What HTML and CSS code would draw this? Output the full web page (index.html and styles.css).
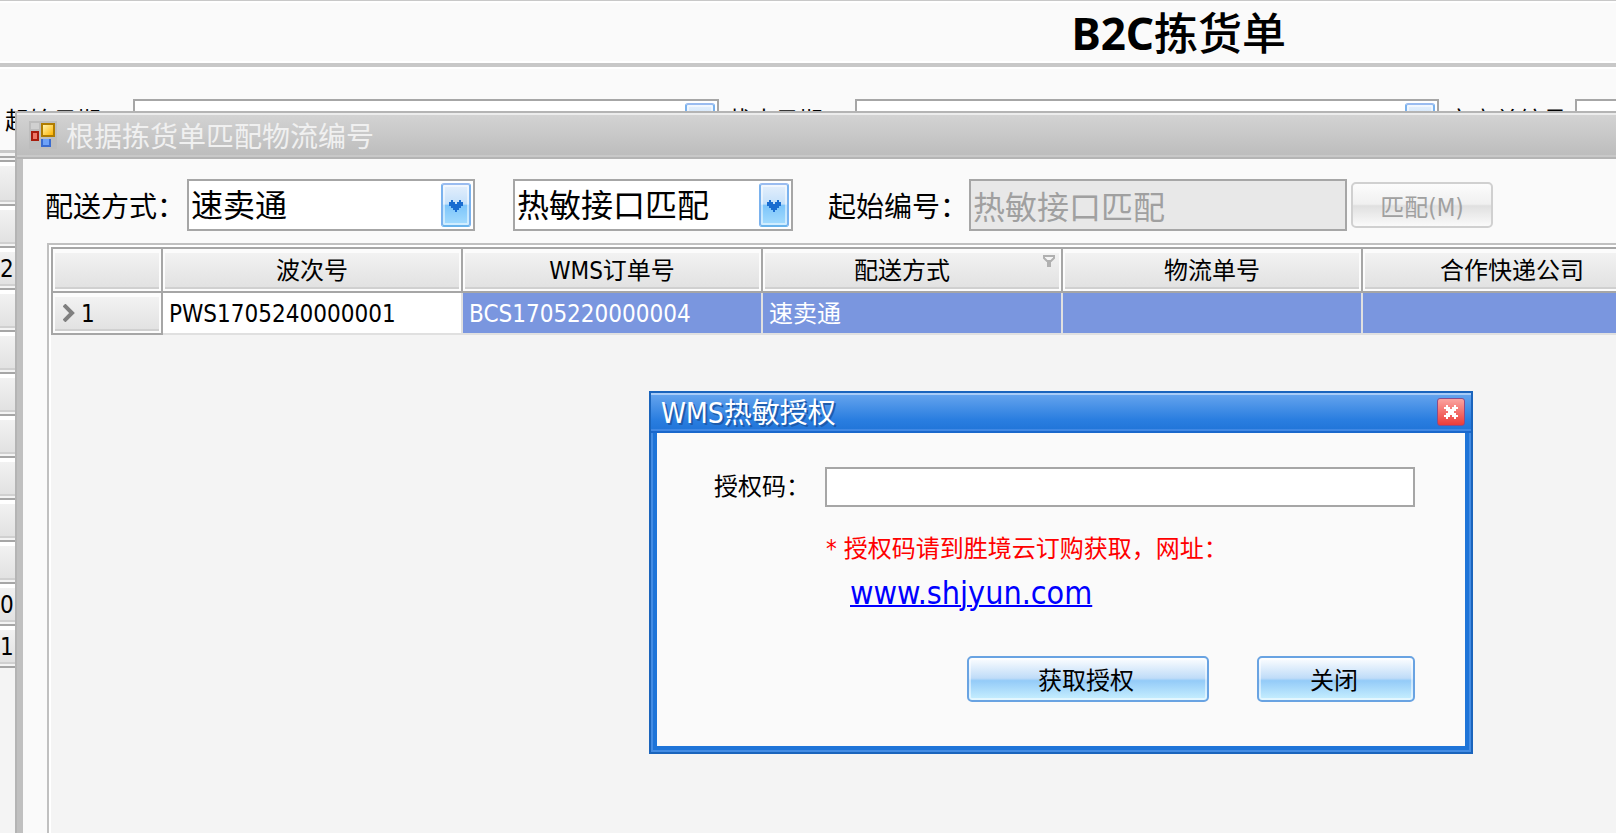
FILE: index.html
```
<!DOCTYPE html>
<html lang="zh-CN">
    <head>
        <title>B2C拣货单</title>
        <meta charset="UTF-8">
        <meta name="viewport" content="width=device-width,initial-scale=1">
        <link rel="stylesheet" href="styles.css">
    </head>
    <body>
        <div class="app">
            <header class="app-header">
                <h1>B2C<span>拣货单</span></h1>
            </header>

            <div class="filters">
                <label for="startDate">起始日期：</label>
                <div class="combo combo-filter">
                    <select id="startDate"><option></option></select>
                    <span class="combo-arrow"></span>
                </div>
                <label for="endDate">截止日期：</label>
                <div class="combo combo-filter">
                    <select id="endDate"><option></option></select>
                    <span class="combo-arrow"></span>
                </div>
                <label for="orderNo">客户单编号</label>
                <input id="orderNo" class="filter-text" type="text">
            </div>

            <div class="row-headers">
                <div class="row-head"></div>
                <div class="row-head"></div>
                <div class="row-head">2</div>
                <div class="row-head"></div>
                <div class="row-head"></div>
                <div class="row-head"></div>
                <div class="row-head"></div>
                <div class="row-head"></div>
                <div class="row-head"></div>
                <div class="row-head"></div>
                <div class="row-head">0</div>
                <div class="row-head">1</div>
            </div>
        </div>

        <section class="window">
            <div class="window-title">
                <svg class="window-icon" viewBox="0 0 28 28" shape-rendering="crispEdges">
                    <defs>
                        <linearGradient id="gold" x1="0" y1="0" x2="1" y2="1"><stop offset="0" stop-color="#fff3b0"/><stop offset="1" stop-color="#ffb400"/></linearGradient>
                    </defs>
                    <rect width="28" height="28" fill="#bdbdbd"/>
                    <rect x="2" y="2" width="8" height="6" fill="#d0d0d0"/>
                    <rect x="12" y="2" width="14" height="14" fill="#b07c00"/>
                    <rect x="14" y="4" width="10" height="10" fill="url(#gold)"/>
                    <rect x="2" y="10" width="8" height="10" fill="#a81c0c"/>
                    <rect x="4" y="12" width="4" height="6" fill="#ee7766"/>
                    <rect x="12" y="18" width="10" height="8" fill="#3a6cd0"/>
                    <rect x="14" y="18" width="6" height="6" fill="#6ea2f8"/>
                </svg>
                <span>根据拣货单匹配物流编号</span>
            </div>

            <div class="window-body">
                <form class="match-form">
                    <label for="delivery">配送方式：</label>
                    <div class="combo combo-delivery">
                        <select id="delivery"><option>速卖通</option></select>
                        <span class="combo-arrow"><svg viewBox="0 0 14 12"><path d="M0 2h2V0h2v2h2v2h2V2h2V0h2v2h2v4h-2v2h-2v2H8v2H6v-2H4V8H2V6H0z"/></svg></span>
                    </div>
                    <div class="combo combo-mode">
                        <select id="mode" aria-label="匹配方式"><option>热敏接口匹配</option></select>
                        <span class="combo-arrow"><svg viewBox="0 0 14 12"><path d="M0 2h2V0h2v2h2v2h2V2h2V0h2v2h2v4h-2v2h-2v2H8v2H6v-2H4V8H2V6H0z"/></svg></span>
                    </div>
                    <label for="startNo">起始编号：</label>
                    <input id="startNo" type="text" value="热敏接口匹配" disabled>
                    <button class="btn-match" type="button" disabled>匹配(M)</button>
                </form>

                <div class="grid">
                    <table>
                        <colgroup>
                            <col class="col-indicator">
                            <col><col><col><col><col>
                        </colgroup>
                        <thead>
                            <tr>
                                <th></th>
                                <th>波次号</th>
                                <th>WMS订单号</th>
                                <th class="filterable">配送方式<svg class="filter-icon" viewBox="0 0 12 12"><path d="M1 1h10v2L8 6H4L1 3z" fill="#f4f4f4" stroke="#b0b0b0" stroke-width="2"/><path d="M4 6h4v6H4z" fill="#b0b0b0"/></svg></th>
                                <th>物流单号</th>
                                <th>合作快递公司</th>
                            </tr>
                        </thead>
                        <tbody>
                            <tr>
                                <th scope="row"><svg class="row-arrow" viewBox="0 0 12 18"><path d="M1 1l8 8-8 8" fill="none" stroke="#808080" stroke-width="4"/></svg>1</th>
                                <td class="focused">PWS1705240000001</td>
                                <td>BCS1705220000004</td>
                                <td>速卖通</td>
                                <td></td>
                                <td></td>
                            </tr>
                        </tbody>
                    </table>
                </div>
            </div>
        </section>

        <section class="dialog" role="dialog" aria-labelledby="dialogTitle">
            <div class="dialog-title">
                <span id="dialogTitle">WMS热敏授权</span>
                <button class="dialog-close" type="button" aria-label="关闭">
                    <svg viewBox="0 0 14 14"><path d="M2 0h2v2h2v2h2V2h2V0h2v2h2v2h-2v2h-2v2h2v2h2v2h-2v2h-2v-2H8v-2H6v2H4v2H2v-2H0v-2h2V8h2V6H2V4H0V2h2z" fill="#fff"/></svg>
                </button>
            </div>
            <form class="dialog-body">
                <div class="code-row">
                    <label for="authCode">授权码：</label>
                    <input id="authCode" type="text">
                </div>
                <div class="hint">
                    <p>* 授权码请到胜境云订购获取，网址：</p>
                    <a href="#">www.shjyun.com</a>
                </div>
                <div class="dialog-buttons">
                    <button class="btn btn-wide" type="button">获取授权</button>
                    <button class="btn" type="button">关闭</button>
                </div>
            </form>
        </section>
    </body>
</html>
```
FILE: styles.css
```
* {
    box-sizing: border-box;
}

body {
    margin: 0;
    height: 100vh;
    position: relative;
    overflow: hidden;
    background: #f4f4f4;
    color: #000;
    font-family: "DejaVu Sans Condensed", "Noto Sans CJK SC", sans-serif;
    font-size: 24px;
    line-height: 28px;
    white-space: nowrap;
}

input, select, button {
    font-family: inherit;
    color: inherit;
    margin: 0;
    border-radius: 0;
}

input[type="text"], select {
    border: 2px solid #a6a6a6;
    background: #fff;
    outline: 0;
}

/* main form, behind the windows */
.app {
    overflow: hidden;
}

.app-header {
    height: 67px;
    padding-left: 66.3vw;
    border-top: 1px solid #c8c8c8;
    border-bottom: 4px solid #c8c8c8;
    background: #fafafa;
    box-shadow: inset 0 2px #fff, inset 0 -2px #fff;
}

.app-header h1 {
    margin: 0;
    font-family: "Noto Sans", "Noto Sans CJK SC", sans-serif;
    font-size: 44px;
    line-height: 60px;
}

.app-header h1 span {
    font-family: "Noto Sans CJK SC", sans-serif;
    font-weight: 500;
}

.filters {
    display: flex;
    height: 86px;
    padding: 30px 0 0 5px;
    background: #fafafa;
    border-top: 2px solid #fff;
    border-bottom: 3px solid #c8c8c8;
}

.filters label {
    flex: none;
    width: 128px;
    padding-top: 8px;
}

.filters .combo + label {
    width: 136px;
    padding-left: 8px;
}

.combo {
    position: relative;
    flex: none;
}

.combo select {
    width: 100%;
    height: 52px;
    padding: 2px 40px 0 2px;
    appearance: none;
    font-size: 32px;
}

.combo-filter {
    width: 586px;
}

.combo-filter + label + .combo-filter {
    width: 584px;
}

.filter-text {
    flex: none;
    width: 400px;
    height: 52px;
}

.combo-arrow {
    position: absolute;
    top: 4px;
    right: 4px;
    width: 30px;
    height: 44px;
    display: flex;
    align-items: center;
    justify-content: center;
    pointer-events: none;
    border: 2px solid #7ab2ee;
    border-top-color: #9abcf0;
    border-bottom-color: #6ab4ec;
    border-radius: 3px;
    background: linear-gradient(#e4effc, #c4e0fa 48%, #7cc4fa 50%, #a4dcfe);
    box-shadow: inset 0 0 0 2px rgba(255,255,255,0.5);
}

.combo-arrow svg {
    width: 14px;
    height: 12px;
    margin-top: 2px;
    fill: #1a6cd0;
}

.row-headers {
    margin-top: 3px;
    border-top: 2px solid #a6a6a6;
    padding-top: 2px;
}

.row-head {
    width: 110px;
    height: 42px;
    line-height: 42px;
    border-top: 2px solid #a6a6a6;
    background: linear-gradient(#f4f4f4, #e0e0e0);
    box-shadow: inset 0 4px #fff, inset 0 -2px #f4f4f4, inset 0 -4px #d0d0d0;
}

.row-head:first-child {
    height: 44px;
}

.row-head:last-child {
    height: 44px;
    border-bottom: 2px solid #a6a6a6;
}

/* match window */
.window {
    position: absolute;
    top: 111px;
    left: 15px;
    right: 0;
    bottom: 0;
    overflow: hidden;
    display: flex;
    flex-direction: column;
    border: 2px solid #b4b4b4;
    border-width: 2px 0 0 2px;
    background: #c0c0c0;
}

.window-title {
    flex: none;
    display: flex;
    align-items: center;
    height: 46px;
    padding: 0 0 0 12px;
    border-bottom: 2px solid #b4b4b4;
    background: linear-gradient(#d4d4d4, #bcbcbc);
    box-shadow: inset 0 2px #ececec, inset 0 -2px #c8c8c8;
    color: #f0f0f0;
    font-size: 28px;
}

.window-title span {
    padding-top: 6px;
}

.window-icon {
    width: 28px;
    height: 28px;
    margin-right: 9px;
}

.window-body {
    flex: 1;
    display: flex;
    flex-direction: column;
    margin-left: 6px;
    padding: 20px 0 0 24px;
    background: #fafafa;
}

.match-form {
    display: flex;
    align-items: center;
    height: 52px;
    margin-bottom: 12px;
    font-size: 28px;
}

.match-form label {
    width: 141px;
    flex: none;
    padding-top: 6px;
}

.match-form label:first-child {
    width: 142px;
    margin-left: -2px;
}

.combo-delivery {
    width: 288px;
    margin-right: 38px;
}

.combo-mode {
    width: 280px;
    margin-right: 35px;
}

.match-form input {
    flex: none;
    width: 378px;
    height: 52px;
    padding: 0 2px;
    font-size: 32px;
}

.match-form input:disabled {
    background: #e8e8e8;
    color: #a0a0a0;
}

.btn-match {
    flex: none;
    width: 142px;
    height: 46px;
    margin-left: 4px;
    padding: 0;
    border: 2px solid #d0d0d0;
    border-radius: 5px;
    background: linear-gradient(#fcfcfc, #f0f0f0 48%, #e0e0e0 52%, #fafafa);
    color: #a0a0a0;
    font-size: 24px;
}

.grid {
    flex: 1;
    padding: 2px 0 0 2px;
    border: 2px solid #c0c0c0;
    border-width: 2px 0 0 2px;
    background: #f4f4f4;
    box-shadow: inset 2px 2px #fff;
    overflow: hidden;
}

.grid table {
    width: 1612px;
    table-layout: fixed;
    border-collapse: separate;
    border-spacing: 0;
    border-left: 2px solid #a6a6a6;
}

.grid col {
    width: 300px;
}

.grid .col-indicator {
    width: 110px;
}

.grid th {
    position: relative;
    height: 46px;
    padding: 2px 0 0;
    border: 2px solid #a6a6a6;
    border-left: 0;
    background: linear-gradient(#f4f4f4, #e0e0e0);
    box-shadow: inset 2px 4px #fcfcfc, inset -2px -2px #fcfcfc, inset 0 -4px #d0d0d0;
    font-weight: normal;
}

.grid .filterable {
    padding-right: 20px;
}

.grid tbody th {
    height: 42px;
    padding-left: 10px;
    border-top: 0;
    text-align: left;
}

.grid td {
    height: 42px;
    padding: 2px 6px 0;
    border-right: 2px solid #e0e0e0;
    border-bottom: 2px solid #e0e0e0;
    background: #7a96df;
    color: #fff;
}

.grid td.focused {
    background: #fff;
    color: #000;
}

.filter-icon {
    position: absolute;
    top: 6px;
    right: 6px;
    width: 12px;
    height: 12px;
}

.row-arrow {
    width: 12px;
    height: 18px;
    margin-right: 6px;
}

/* authorization dialog */
.dialog {
    position: absolute;
    top: 391px;
    left: 649px;
    width: 824px;
    padding: 0 6px 6px;
    border: 2px solid #1a64bc;
    background: #1e74d8;
    box-shadow: inset 2px 0 #438ce4, inset -2px -2px #438ce4;
}

.dialog-title {
    display: flex;
    align-items: center;
    justify-content: space-between;
    height: 40px;
    margin: 0 -6px;
    padding: 0 6px 0 10px;
    border-bottom: 2px solid #1a68cc;
    background: linear-gradient(#68a6ee, #2a7ee0 70%, #2074d8);
    box-shadow: inset 0 2px #a8ccf8, inset 0 -2px #4088e4;
    color: #fff;
    font-size: 28px;
    text-shadow: 2px 2px #1e5cac;
}

.dialog-title span {
    padding-top: 4px;
}

.dialog-close {
    width: 28px;
    height: 28px;
    padding: 0;
    display: flex;
    align-items: center;
    justify-content: center;
    border: 1px solid #8a4c88;
    border-radius: 3px;
    background: linear-gradient(#faa4a0, #ec3c38);
}

.dialog-close svg {
    width: 14px;
    height: 14px;
}

.dialog-body {
    padding: 34px 50px 44px 57px;
    background: #fafafa;
}

.code-row {
    display: flex;
    align-items: center;
}

.code-row label {
    width: 111px;
}

.code-row input {
    flex: 1;
    height: 40px;
    padding: 0 4px;
    font-size: 24px;
}

.hint {
    padding: 28px 0 0 112px;
    color: #f00;
}

.hint p {
    margin: 0;
}

.hint a {
    display: inline-block;
    margin: 12px 0 0 24px;
    color: #00f;
    font-size: 32px;
    line-height: 36px;
    text-decoration-thickness: 2px;
}

.dialog-buttons {
    display: flex;
    justify-content: flex-end;
    gap: 48px;
    margin-top: 45px;
}

.btn {
    width: 158px;
    height: 46px;
    padding: 0 4px 2px 0;
    border: 2px solid #69a3e2;
    border-radius: 5px;
    background: linear-gradient(#fdfeff, #bfdcf8 48%, #94cbf8 54%, #c8f0ff);
    box-shadow: inset 0 0 0 2px rgba(255,255,255,0.5);
    font-size: 24px;
}

.btn-wide {
    width: 242px;
}
```
